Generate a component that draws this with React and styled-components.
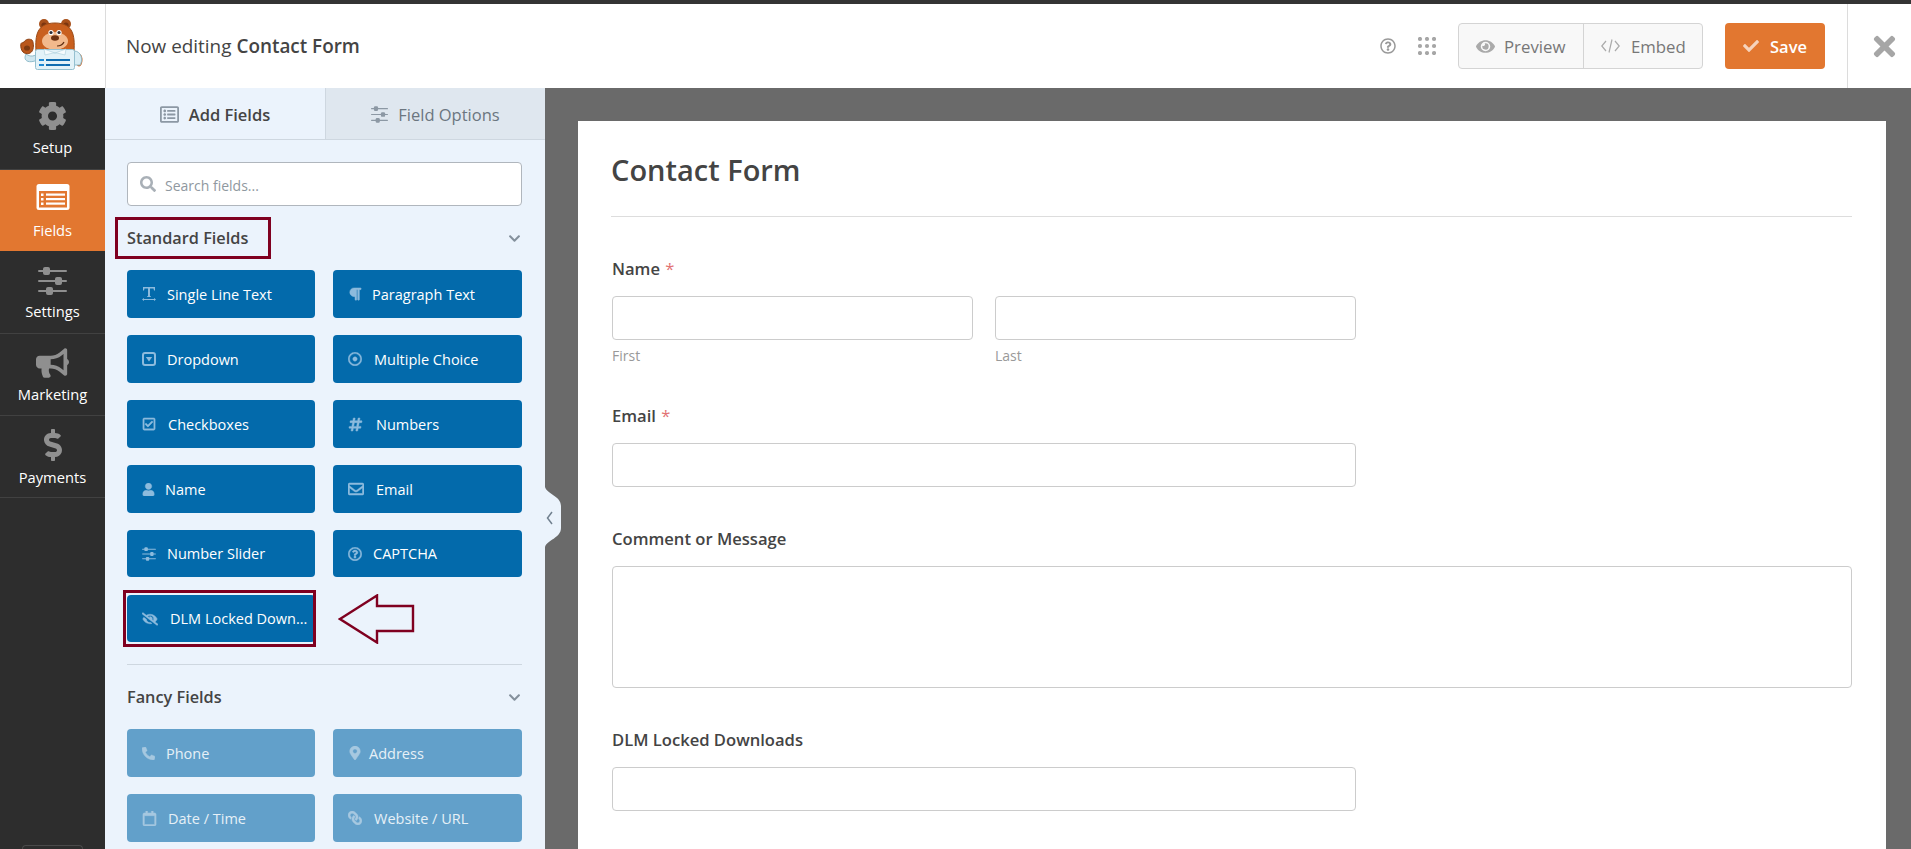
import React from 'react';
import styled, { createGlobalStyle } from 'styled-components';
import {
  FaCog, FaBullhorn, FaDollarSign, FaTimes, FaCheck, FaEye,
  FaRegListAlt, FaSearch, FaChevronDown, FaParagraph,
  FaRegDotCircle, FaRegCheckSquare, FaHashtag, FaUser, FaRegEnvelope, FaRegQuestionCircle,
  FaEyeSlash, FaPhoneAlt, FaMapMarkerAlt, FaRegCalendar, FaLink,
} from 'react-icons/fa';

const Global = createGlobalStyle`
  *, *::before, *::after { box-sizing: border-box; }
  html, body { margin: 0; padding: 0; height: 100%; overflow: hidden; }
  body { font-family: "Open Sans", "Liberation Sans", sans-serif; color: #444; }
`;

const Page = styled.div`
  width: 100vw; height: 100vh; display: flex; flex-direction: column; overflow: hidden;
  border-top: 4px solid #343434; background: #6a6a6a;
`;
const Header = styled.header`
  height: 84px; flex: none; display: flex; align-items: stretch; background: #fff; position: relative; z-index: 2;
`;
const LogoCell = styled.div`
  width: 106px; flex: none; border-right: 1px solid #dcdcdc; display: flex; align-items: center; justify-content: flex-start;
  padding-left: 19px;
`;
const Title = styled.div`
  flex: 1; display: flex; align-items: center; padding-left: 20px; font-size: 18.900px; color: #444;
  b { font-weight: 600; margin-left: 5px; }
`;
const Tools = styled.div`
  display: flex; align-items: center; gap: 22px; padding-right: 22px; color: #999;
`;
const BtnGroup = styled.div`
  display: flex; height: 46px; width: 245px; border: 1px solid #d4d4d4; border-radius: 4px; background: #f8f8f8; overflow: hidden;
`;
const GroupBtn = styled.div`
  width: ${p => p.$w}px; display: flex; align-items: center; gap: ${p => p.$gap}px; padding-left: 17px;
  font-size: 16.800px; font-weight: 500; color: #777;
  & + & { border-left: 1px solid #d4d4d4; }
  svg { color: #aaa; }
`;
const SaveBtn = styled.div`
  width: 100px; height: 46px; border-radius: 4px; background: #e27730; color: #fff; font-size: 16.500px; font-weight: 600;
  display: flex; align-items: center; justify-content: center; gap: 11px;
  svg { color: #f6d3bc; }
`;
const CloseCell = styled.div`
  width: 64px; flex: none; border-left: 1px solid #dcdcdc; display: flex; align-items: center; padding-left: 21px; color: #a6a6a6;
`;
const Body = styled.div`
  flex: 1; min-height: 0; display: flex;
`;
const Sidebar = styled.nav`
  width: 105px; flex: none; background: #2d2d2d; display: flex; flex-direction: column;
`;
const NavItem = styled.div`
  height: ${p => p.$h}px; display: flex; flex-direction: column; align-items: center; padding-top: ${p => p.$top}px;
  background: ${p => (p.$active ? '#e27730' : 'transparent')};
  border-bottom: ${p => (p.$active ? '0' : '1px solid #414141')};
  color: #fff; font-size: 14.700px; line-height: 20px;
  svg { color: #8f8f8f; display: block; height: 32px; margin-bottom: ${p => p.$gap}px; }
`;
const SideFoot = styled.div`
  margin: auto 22px 0; height: 4px; border: 1px solid #4a4a4a; border-bottom: 0; border-radius: 4px 4px 0 0;
`;
const Panel = styled.aside`
  width: 440px; flex: none; background: #ebf3fc; display: flex; flex-direction: column; overflow: hidden;
`;
const Tabs = styled.div`
  height: 52px; flex: none; display: flex; border-bottom: 1px solid #ced7e0;
`;
const Tab = styled.div`
  width: ${p => p.$w}px; display: flex; align-items: center; justify-content: center; gap: 10px; font-size: 16.500px; padding-top: 1px;
  font-weight: ${p => (p.$active ? 600 : 400)}; color: ${p => (p.$active ? '#444' : '#6b7680')};
  background: ${p => (p.$active ? 'transparent' : '#dfe7ef')};
  border-left: ${p => (p.$active ? '0' : '1px solid #ced7e0')};
  svg { color: #8c98a4; }
`;
const PanelBody = styled.div`
  padding: 22px 23px 0 22px;
`;
const Search = styled.div`
  height: 44px; border: 1px solid #b0b6bd; border-radius: 4px; background: #fff; display: flex; align-items: center; gap: 9px; padding-left: 12px;
  svg { color: #a9b0b7; flex: none; }
`;
const SearchInput = styled.input`
  flex: 1; min-width: 0; border: 0; outline: 0; background: none; padding: 2px 0 0; font: 400 14px "Open Sans", sans-serif; color: #444;
  &::placeholder { color: #8f98a0; opacity: 1; }
`;
const GroupTitle = styled.div`
  height: 42px; margin: 11px 0; display: flex; align-items: center; justify-content: space-between; padding-right: 1px;
  font-size: 16.300px; font-weight: 600; color: #444;
  > svg { color: #84909c; }
`;
const TitleText = styled.span`
  position: relative;
  ${p => p.$marked && `
    &::after {
      content: ''; position: absolute; left: -12px; top: -10px; width: 156px; height: 42px; border: 3px solid #7f0020;
    }
  `}
`;
const FieldGrid = styled.div`
  display: grid; grid-template-columns: 188px 189px; column-gap: 18px; grid-auto-rows: 48px; row-gap: 17px;
`;
const FieldBtn = styled.div`
  position: relative; height: ${p => (p.$short ? 47 : 48)}px; border-radius: 4px; display: flex; align-items: center; padding-left: 15px;
  background: ${p => (p.$off ? '#62a0ca' : '#036aab')}; color: ${p => (p.$off ? '#e6f0f7' : '#fff')};
  font-size: 14.500px; white-space: nowrap;
`;
const IconSlot = styled.span`
  width: ${p => p.$w}px; flex: none; display: flex; align-items: center; color: ${p => (p.$off ? '#a6c8e0' : '#8dbbdd')};
  svg { flex: none; stroke: currentColor; stroke-width: 16; transform: ${p => (p.$flip ? 'scaleX(-1)' : 'none')}; }
  svg.plain { stroke: none; }
`;
const Marker = styled.span`
  position: absolute; left: -4px; top: -5px; width: 193px; height: 57px; border: 3px solid #7f0020; pointer-events: none;
`;
const ArrowCell = styled.div`
  display: flex; align-items: center; padding-left: 5px;
`;
const GroupRule = styled.div`
  height: 1px; background: #ced7e0; margin-top: 21px;
`;
const Canvas = styled.main`
  flex: 1; min-width: 0; position: relative; padding: 33px 25px 0 33px; overflow: hidden; background: #6a6a6a;
`;
const Collapse = styled.svg`
  position: absolute; left: 0; top: 399px; display: block;
`;
const FormCard = styled.section`
  background: #fff; height: 100%; padding: 0 34px 0 33px;
`;
const FormTitle = styled.h1`
  margin: 0; height: 96px; padding-top: 29px; font-size: 29px; line-height: 40px; font-weight: 600; color: #444; border-bottom: 1px solid #ddd;
`;
const Field = styled.div`
  margin-top: ${p => p.$top}px; padding-left: 1px;
`;
const Label = styled.div`
  font-size: 16.600px; font-weight: 600; line-height: 20px; color: #444; margin-bottom: 17px;
  i { font-style: normal; font-weight: 400; color: #d63638; margin-left: 1px; opacity: .7; }
`;
const Row = styled.div`
  display: flex; gap: 22px; width: ${p => p.$w}px;
`;
const Col = styled.div`
  flex: 1; min-width: 0;
`;
const TextInput = styled.input`
  display: block; width: ${p => p.$w ? `${p.$w}px` : '100%'}; height: 44px; border: 1px solid #ccc; border-radius: 4px; background: #fff; outline: 0;
`;
const TextArea = styled.textarea`
  display: block; width: 100%; height: 122px; border: 1px solid #ccc; border-radius: 4px; background: #fff; outline: 0; resize: none;
`;
const Sub = styled.div`
  font-size: 14px; line-height: 16px; color: #999; margin-top: 8px;
`;

const Bear = () => (
  <svg width="64" height="54" viewBox="20 20 64 54" aria-hidden="true">
    <path d="M27 55 C23 63 32 65 40 60 L40 53 C36 58 31 58 27 55Z" fill="#cfe6ef" stroke="#8fbccb" strokeWidth="1" />
    <ellipse cx="80" cy="61" rx="3.500" ry="6.500" fill="#c9601f" />
    <path d="M75 52 C83 52 84 62 81 66 L75 66Z" fill="#d8edf5" stroke="#8fbccb" strokeWidth="1" />
    <circle cx="45" cy="25" r="5" fill="#a8501a" />
    <circle cx="67" cy="25" r="5" fill="#a8501a" />
    <circle cx="45" cy="26" r="2.600" fill="#7b3510" />
    <circle cx="67" cy="26" r="2.600" fill="#7b3510" />
    <path d="M37 52 C36 36 38 24 56 24 C74 24 76 36 75 52Z" fill="#c9601f" stroke="#9a4a16" strokeWidth="1" />
    <ellipse cx="56" cy="42" rx="13" ry="9" fill="#f2b98c" />
    <circle cx="52" cy="33.500" r="2.600" fill="#fff" />
    <circle cx="60" cy="33.500" r="2.600" fill="#fff" />
    <circle cx="52" cy="33.500" r="1.600" fill="#2b2b35" />
    <circle cx="60" cy="33.500" r="1.600" fill="#2b2b35" />
    <ellipse cx="56" cy="39" rx="4" ry="2.800" fill="#6e3212" />
    <path d="M58 47 Q63 47 65 43" fill="none" stroke="#5c2a0e" strokeWidth="1.200" />
    <path d="M24 44 C21 42 21 50 24 53 C27 56 33 55 34 50 C35 46 34 42 33 41 C29 39 26 41 24 44Z" fill="#b9571c" stroke="#8d4113" strokeWidth="1" />
    <ellipse cx="28" cy="49" rx="3" ry="2.600" fill="#7d3a12" />
    <rect x="36.500" y="50.500" width="39" height="20" rx="2" fill="#e3f2f8" stroke="#94c0d0" strokeWidth="1" />
    <path d="M45 50 L56 54 L67 50 L66 56 L58 54 L56 54 L54 54 L46 56Z" fill="#f6fbfd" stroke="#a9cdda" strokeWidth=".6" />
    <rect x="40" y="60" width="5" height="2" fill="#1e88d2" />
    <rect x="47" y="60" width="24" height="2" fill="#0f6cb0" />
    <rect x="40" y="65" width="5" height="2" fill="#1e88d2" />
    <rect x="47" y="65" width="24" height="2" fill="#0f6cb0" />
  </svg>
);

const Dots = () => (
  <svg width="18" height="18" viewBox="0 0 18 18" fill="#a6a6a6" aria-hidden="true">
    {[2, 9, 16].flatMap(y => [2, 9, 16].map(x => <circle key={`${x}-${y}`} cx={x} cy={y} r="2.100" />))}
  </svg>
);

const Sliders = ({ size }) => (
  <svg className="plain" width={size} height={size} viewBox="0 0 29 29" fill="currentColor" aria-hidden="true">
    <rect x="0" y="3.500" width="29" height="2" rx="1" />
    <rect x="0" y="13.500" width="29" height="2" rx="1" />
    <rect x="0" y="23.500" width="29" height="2" rx="1" />
    <rect x="5" y="0.500" width="7" height="8" rx="2" />
    <rect x="17" y="10.500" width="7" height="8" rx="2" />
    <rect x="8" y="20.500" width="7" height="8" rx="2" />
  </svg>
);

const FormIcon = () => (
  <svg width="34" height="32" viewBox="0 0 34 32" aria-hidden="true">
    <rect x="0.500" y="3" width="33" height="26" rx="2.500" fill="#fff" />
    <rect x="3" y="10" width="28" height="16.500" fill="#e27730" />
    <rect x="5" y="12.500" width="2.500" height="2.500" fill="#fff" />
    <rect x="5" y="17" width="2.500" height="2.500" fill="#fff" />
    <rect x="5" y="21.500" width="2.500" height="2.500" fill="#fff" />
    <rect x="10" y="12.500" width="19" height="2.200" fill="#fff" />
    <rect x="10" y="17" width="19" height="2.200" fill="#fff" />
    <rect x="10" y="21.500" width="19" height="2.200" fill="#fff" />
  </svg>
);

const TextIcon = ({ size }) => (
  <svg className="plain" width={size} height={size} viewBox="0 0 14 14" fill="currentColor" aria-hidden="true">
    <path d="M1 0 H13 V3.500 H12 L11.500 1.500 H8 V9 L9 9.500 V10 H5 V9.500 L6 9 V1.500 H2.500 L2 3.500 H1 Z" />
    <path d="M0 12.500 L2 11 V12 H12 V11 L14 12.500 L12 14 V13 H2 V14 Z" />
  </svg>
);

const DropIcon = ({ size }) => (
  <svg className="plain" width={size} height={size} viewBox="0 0 14 14" aria-hidden="true">
    <rect x="1" y="1" width="12" height="12" rx="2" fill="none" stroke="currentColor" strokeWidth="2" />
    <path d="M3.800 5 H10.200 L7 9.500 Z" fill="currentColor" />
  </svg>
);

const CodeIcon = () => (
  <svg width="19" height="14" viewBox="0 0 19 14" fill="none" stroke="#aaa" strokeWidth="1.200" aria-hidden="true">
    <path d="M5 2 L0.800 7 L5 12" />
    <path d="M14 2 L18.200 7 L14 12" />
    <path d="M11 0.500 L8 13.500" />
  </svg>
);

const nav = [
  { label: 'Setup', icon: <FaCog size={29} />, h: 82, top: 12, gap: 5 },
  { label: 'Fields', icon: <FormIcon />, h: 81, top: 11, gap: 7, active: true },
  { label: 'Settings', icon: <Sliders size={29} />, h: 83, top: 14, gap: 4 },
  { label: 'Marketing', icon: <FaBullhorn size={33} />, h: 82, top: 13, gap: 5 },
  { label: 'Payments', icon: <FaDollarSign size={34} />, h: 82, top: 13, gap: 6 },
];

const standard = [
  { label: 'Single Line Text', Icon: TextIcon, s: 14, w: 15 },
  { label: 'Paragraph Text', Icon: FaParagraph, s: 14, w: 14 },
  { label: 'Dropdown', Icon: DropIcon, s: 14, w: 15 },
  { label: 'Multiple Choice', Icon: FaRegDotCircle, s: 14, w: 16 },
  { label: 'Checkboxes', Icon: FaRegCheckSquare, s: 14, w: 16 },
  { label: 'Numbers', Icon: FaHashtag, s: 15, w: 18 },
  { label: 'Name', Icon: FaUser, s: 13, w: 13 },
  { label: 'Email', Icon: FaRegEnvelope, s: 16, w: 18 },
  { label: 'Number Slider', Icon: Sliders, s: 14, w: 15, short: true },
  { label: 'CAPTCHA', Icon: FaRegQuestionCircle, s: 14, w: 15, short: true },
];

const fancy = [
  { label: 'Phone', Icon: FaPhoneAlt, s: 13, w: 14 },
  { label: 'Address', Icon: FaMapMarkerAlt, s: 14, w: 11 },
  { label: 'Date / Time', Icon: FaRegCalendar, s: 15, w: 16 },
  { label: 'Website / URL', Icon: FaLink, s: 14, w: 16, flip: true },
];

const Btn = ({ item, off, marked }) => {
  const { Icon, s, w, label, short, flip } = item;
  return (
    <FieldBtn $off={off} $short={short}>
      <IconSlot $w={w + 10} $off={off} $flip={flip}><Icon size={s} /></IconSlot>
      {label}
      {marked && <Marker />}
    </FieldBtn>
  );
};

export default function App() {
  return (
    <>
      <Global />
      <Page>
        <Header>
          <LogoCell><Bear /></LogoCell>
          <Title>Now editing <b>Contact Form</b></Title>
          <Tools>
            <FaRegQuestionCircle size={16} />
            <Dots />
            <BtnGroup>
              <GroupBtn $w={125} $gap={9}><FaEye size={19} />Preview</GroupBtn>
              <GroupBtn $w={120} $gap={11}><CodeIcon />Embed</GroupBtn>
            </BtnGroup>
            <SaveBtn><FaCheck size={16} />Save</SaveBtn>
          </Tools>
          <CloseCell><FaTimes size={31} /></CloseCell>
        </Header>
        <Body>
          <Sidebar>
            {nav.map(({ label, icon, h, top, gap, active }) => (
              <NavItem key={label} $h={h} $top={top} $gap={gap} $active={active}>
                {icon}
                {label}
              </NavItem>
            ))}
            <SideFoot />
          </Sidebar>
          <Panel>
            <Tabs>
              <Tab $w={220} $active><FaRegListAlt size={19} />Add Fields</Tab>
              <Tab $w={220}><Sliders size={17} />Field Options</Tab>
            </Tabs>
            <PanelBody>
              <Search>
                <FaSearch size={16} />
                <SearchInput placeholder="Search fields..." readOnly />
              </Search>
              <GroupTitle>
                <TitleText $marked>Standard Fields</TitleText>
                <FaChevronDown size={13} />
              </GroupTitle>
              <FieldGrid>
                {standard.map(item => <Btn key={item.label} item={item} />)}
                <Btn item={{ label: 'DLM Locked Down...', Icon: FaEyeSlash, s: 16, w: 18, short: true }} marked />
                <ArrowCell>
                  <svg width="78" height="50" viewBox="0 0 78 50" aria-hidden="true">
                    <path d="M2 25 L39 1.500 L39 12 L75 12 L75 37 L39 37 L39 48.500 Z" fill="none" stroke="#7f0020" strokeWidth="2.400" />
                  </svg>
                </ArrowCell>
              </FieldGrid>
              <GroupRule />
              <GroupTitle>
                <TitleText>Fancy Fields</TitleText>
                <FaChevronDown size={13} />
              </GroupTitle>
              <FieldGrid>
                {fancy.map(item => <Btn key={item.label} item={item} off />)}
              </FieldGrid>
            </PanelBody>
          </Panel>
          <Canvas>
            <Collapse width="16" height="60" viewBox="0 0 16 60" aria-hidden="true">
              <path d="M0 0 C2 7 16 9 16 19 L16 41 C16 51 2 53 0 60 Z" fill="#ebf3fc" />
              <path d="M7 25 L2.500 31 L7 37" fill="none" stroke="#71808f" strokeWidth="1.500" />
            </Collapse>
            <FormCard>
              <FormTitle>Contact Form</FormTitle>
              <Field $top={42}>
                <Label>Name <i>*</i></Label>
                <Row $w={744}>
                  <Col><TextInput readOnly /><Sub>First</Sub></Col>
                  <Col><TextInput readOnly /><Sub>Last</Sub></Col>
                </Row>
              </Field>
              <Field $top={42}>
                <Label>Email <i>*</i></Label>
                <TextInput $w={744} readOnly />
              </Field>
              <Field $top={42}>
                <Label>Comment or Message</Label>
                <TextArea readOnly />
              </Field>
              <Field $top={42}>
                <Label>DLM Locked Downloads</Label>
                <TextInput $w={744} readOnly />
              </Field>
            </FormCard>
          </Canvas>
        </Body>
      </Page>
    </>
  );
}
